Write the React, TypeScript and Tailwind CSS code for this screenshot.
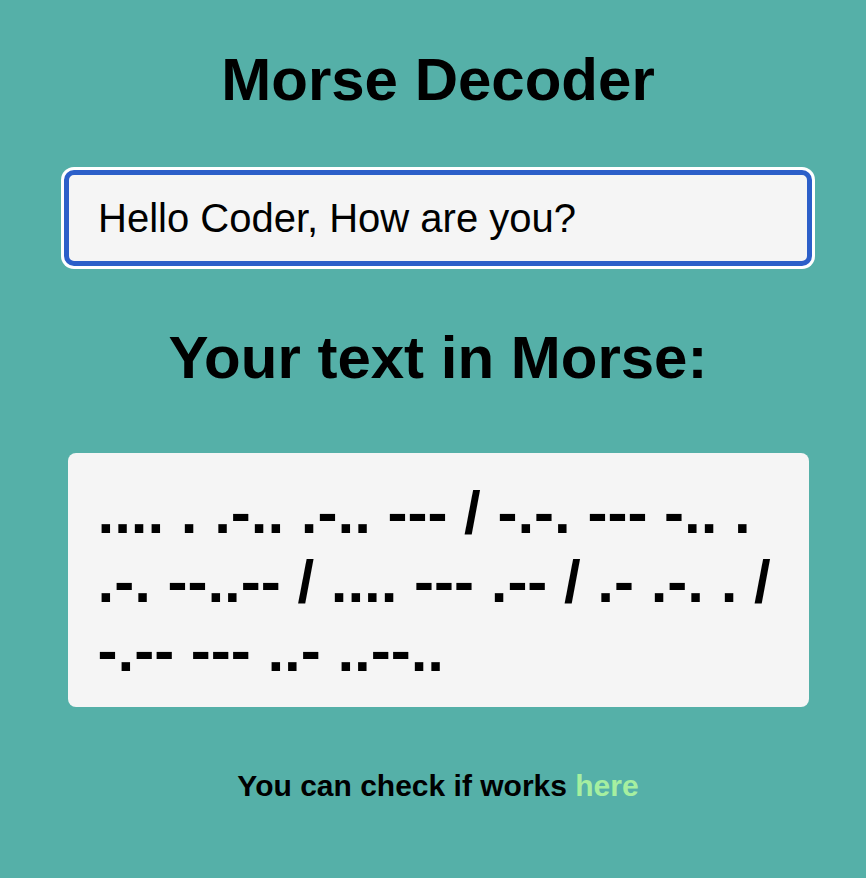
import { useState } from "react";

const MORSE: Record<string, string> = {
	a: ".-", b: "-...", c: "-.-.", d: "-..", e: ".", f: "..-.", g: "--.", h: "....",
	i: "..", j: ".---", k: "-.-", l: ".-..", m: "--", n: "-.", o: "---", p: ".--.",
	q: "--.-", r: ".-.", s: "...", t: "-", u: "..-", v: "...-", w: ".--", x: "-..-",
	y: "-.--", z: "--..", "0": "-----", "1": ".----", "2": "..---", "3": "...--",
	"4": "....-", "5": ".....", "6": "-....", "7": "--...", "8": "---..", "9": "----.",
	",": "--..--", "?": "..--..", ".": ".-.-.-", "!": "-.-.--", "'": ".----.",
};

// words split on spaces, letters joined by a space, words by " / "
const toMorse = (text: string) =>
	text
		.trim()
		.split(/\s+/)
		.filter((w) => w.length > 0)
		.map((w) =>
			w
				.toLowerCase()
				.split("")
				.map((ch) => MORSE[ch])
				.filter(Boolean)
				.join(" ")
		)
		.join(" / ");

function App() {
	const [text, setText] = useState("Hello Coder, How are you?");

	return (
		<div className="min-h-screen w-full bg-[#55b0a8] pl-[10px] font-['Liberation_Sans',Arial,sans-serif] text-black">
			<div className="flex flex-col items-center pt-[45px]">
				<h1 className="text-[60px] font-bold leading-[69px]">Morse Decoder</h1>

				<input
					className="mt-[56px] h-[96px] w-[748px] rounded-[10px] border-[5px] border-[#2c5fc9] bg-[#f5f5f5] pl-[29px] text-[40px] text-black outline-none ring-[3px] ring-white"
					value={text}
					onChange={(e) => setText(e.target.value)}
				/>

				<h2 className="mt-[57px] text-[60px] font-bold leading-[69px]">Your text in Morse:</h2>

				<div className="mt-[61px] w-[741px] rounded-lg bg-[#f5f5f5] pt-[25px] pb-[22px] px-[30px] text-[60px] font-bold leading-[69px]">
					{toMorse(text)}
				</div>

				<p className="mt-[62px] text-[30px] font-bold leading-[34px]">
					You can check if works{" "}
					<a href="#" className="text-[#a6efa0]">
						here
					</a>
				</p>
			</div>
		</div>
	);
}

export default App;
